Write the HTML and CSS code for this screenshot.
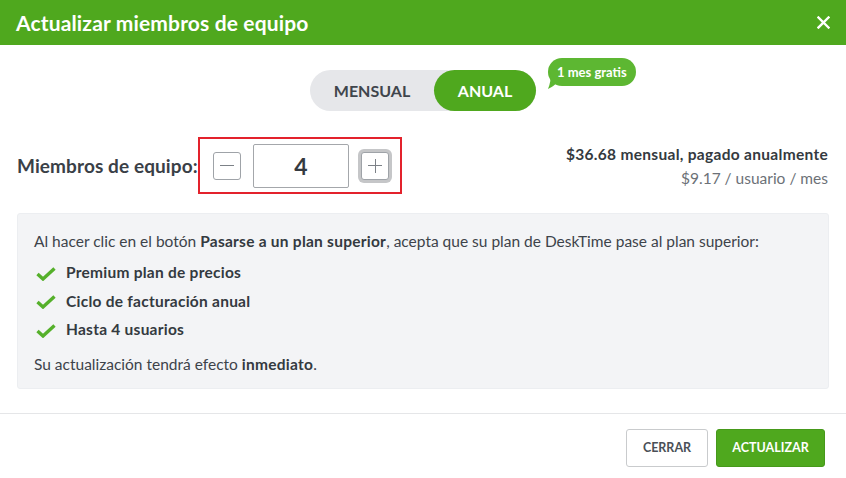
FILE: index.html
```html
<!DOCTYPE html>
<html lang="es">
<head>
<meta charset="utf-8">
<title>Actualizar miembros de equipo</title>
<link rel="stylesheet" href="styles.css">
</head>
<body>
<div class="modal">
  <header class="modal-header">
    <h1 class="modal-title">Actualizar miembros de equipo</h1>
    <button class="close-btn" aria-label="Cerrar">
      <svg width="13" height="13" viewBox="0 0 13 13"><path d="M1.5 1.5 L11.5 11.5 M11.5 1.5 L1.5 11.5" stroke="#fff" stroke-width="2.4" stroke-linecap="square" fill="none"/></svg>
    </button>
  </header>

  <div class="toggle-wrap">
    <div class="toggle">
      <span class="toggle-opt">MENSUAL</span>
      <span class="toggle-opt active">ANUAL</span>
      <span class="badge">
        <svg class="badge-tail" width="14" height="18" viewBox="0 0 14 18"><path d="M3 0 L14 0 L14 6 C10 10 5 15 0 17 C2 12 3 7 3 0 Z" fill="#5db732"/></svg>
        <span class="badge-text">1 mes gratis</span>
      </span>
    </div>
  </div>

  <div class="members-row">
    <div class="members-label">Miembros de equipo:</div>
    <div class="stepper">
      <button class="step-btn minus" aria-label="menos"><span class="bar-h"></span></button>
      <div class="step-input">4</div>
      <button class="step-btn plus focus" aria-label="más"><span class="bar-h"></span><span class="bar-v"></span></button>
    </div>
    <div class="price">
      <div class="price-main">$36.68 mensual, pagado anualmente</div>
      <div class="price-sub">$9.17 / usuario / mes</div>
    </div>
  </div>

  <div class="info">
    <p class="info-line">Al hacer clic en el botón <b>Pasarse a un plan superior</b>, acepta que su plan de DeskTime pase al plan superior:</p>
    <ul class="checks">
      <li><svg class="check" width="20" height="14" viewBox="0 0 20 14"><path d="M1.5 7 L7 12 L18.5 1.5" stroke="#55b02b" stroke-width="3.4" fill="none"/></svg><b>Premium plan de precios</b></li>
      <li><svg class="check" width="20" height="14" viewBox="0 0 20 14"><path d="M1.5 7 L7 12 L18.5 1.5" stroke="#55b02b" stroke-width="3.4" fill="none"/></svg><b>Ciclo de facturación anual</b></li>
      <li><svg class="check" width="20" height="14" viewBox="0 0 20 14"><path d="M1.5 7 L7 12 L18.5 1.5" stroke="#55b02b" stroke-width="3.4" fill="none"/></svg><b>Hasta 4 usuarios</b></li>
    </ul>
    <p class="info-line last">Su actualización tendrá efecto <b>inmediato</b>.</p>
  </div>

  <footer class="modal-footer">
    <button class="btn btn-close">CERRAR</button>
    <button class="btn btn-primary">ACTUALIZAR</button>
  </footer>
</div>
</body>
</html>
```
FILE: styles.css
```css
* { box-sizing: border-box; }
html, body { margin: 0; padding: 0; background: #fff; }
body {
  font-family: "Lato", "Liberation Sans", sans-serif;
  color: #3d434a;
  font-size: 15.5px;
}
button { font-family: inherit; }

.modal { width: 846px; height: 478px; background: #fff; }

.modal-header {
  height: 45px;
  background: #4fa81e;
  display: flex;
  align-items: center;
  justify-content: space-between;
  padding: 0 16px 0 16px;
}
.modal-title {
  margin: 0;
  color: #fff;
  font-size: 21px;
  font-weight: 700;
  letter-spacing: 0.15px;
}
.close-btn {
  background: none; border: 0; padding: 0;
  width: 13px; height: 13px;
  display: flex;
}

.toggle-wrap {
  display: flex;
  justify-content: center;
  padding-top: 25px;
}
.toggle {
  position: relative;
  display: flex;
  width: 226px;
  height: 41px;
  background: #e6e7ea;
  border-radius: 21px;
}
.toggle-opt {
  display: flex;
  align-items: center;
  justify-content: center;
  font-size: 16px;
  font-weight: 700;
  color: #3f454c;
  border-radius: 21px;
}
.toggle-opt:first-child { width: 124px; }
.toggle-opt.active {
  width: 102px;
  background: #4fa81e;
  color: #fff;
}
.badge {
  position: absolute;
  left: 238px;
  top: -12px;
  height: 28px;
  padding: 0 9px;
  background: #5db732;
  border-radius: 14px;
  color: #fff;
  font-size: 13px;
  font-weight: 700;
  display: flex;
  align-items: center;
  white-space: nowrap;
}
.badge-tail {
  position: absolute;
  left: 0;
  top: 14px;
}
.badge-text { position: relative; }

.members-row {
  display: flex;
  align-items: center;
  margin-top: 26px;
  padding: 0 18px 0 17px;
}
.members-label {
  width: 181px;
  white-space: nowrap;
  font-size: 19px;
  font-weight: 700;
  letter-spacing: 0.1px;
  color: #3a4047;
}
.stepper {
  display: flex;
  align-items: center;
  width: 204px;
  height: 57px;
  border: 2px solid #e3222c;
  padding: 0 0 0 13px;
}
.step-btn {
  position: relative;
  width: 28px;
  height: 28px;
  padding: 0;
  background: #fff;
  border: 1px solid #9fa3a8;
  border-radius: 3px;
}
.step-btn.focus {
  box-shadow: 0 0 0 3px #c5c6c8;
  margin-left: 12px;
}
.bar-h {
  position: absolute;
  left: 6px; right: 6px;
  top: 12.5px;
  height: 1px;
  background: #7c8187;
}
.bar-v {
  position: absolute;
  top: 6px; bottom: 6px;
  left: 12.5px;
  width: 1px;
  background: #7c8187;
}
.step-input {
  width: 96px;
  height: 44px;
  margin-left: 12px;
  border: 1px solid #a4a7ab;
  border-radius: 2px;
  display: flex;
  align-items: center;
  justify-content: center;
  font-size: 23px;
  font-weight: 700;
  color: #343a40;
}

.price {
  margin-left: auto;
  text-align: right;
  line-height: 24px;
}
.price-main { font-weight: 700; color: #343a40; letter-spacing: 0.3px; }
.price-sub { color: #6c7177; }

.info {
  margin: 19px 17px 0 17px;
  background: #f3f4f6;
  border: 1px solid #eceef1;
  border-radius: 3px;
  padding: 15px 16px 12px 16px;
  line-height: 24px;
}
.info-line { margin: 0; }
.info-line.last { margin-top: 8px; }
.info b { color: #343a40; font-weight: 700; letter-spacing: 0.25px; }
.checks {
  list-style: none;
  margin: 5px 0 0 0;
  padding: 0;
}
.checks li {
  display: flex;
  align-items: center;
  height: 28.5px;
  padding-left: 2px;
}
.check { margin-right: 10px; margin-top: 3px; }

.modal-footer {
  margin-top: 24px;
  border-top: 1px solid #e5e6e8;
  display: flex;
  justify-content: flex-end;
  gap: 8px;
  padding: 15px 21px 0 0;
}
.btn {
  height: 38px;
  border-radius: 3px;
  font-size: 12.5px;
  font-weight: 700;
  cursor: pointer;
}
.btn-close {
  width: 82px;
  background: #fff;
  border: 1px solid #c9cbcd;
  color: #4a5057;
}
.btn-primary {
  width: 109px;
  background: #4fa81e;
  border: 1px solid #46991a;
  color: #fff;
}
```
